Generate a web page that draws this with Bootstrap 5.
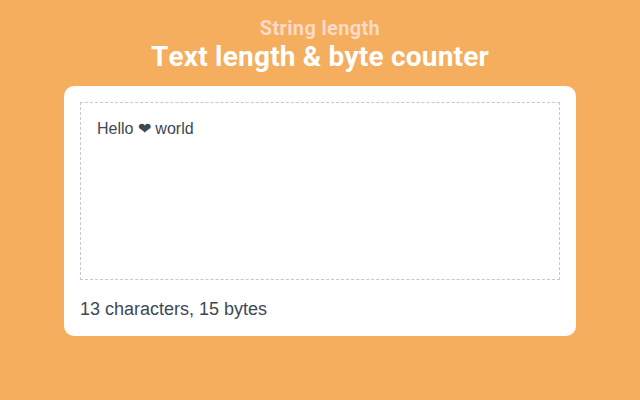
<!DOCTYPE html>
<html lang="en">
<head>
<meta charset="utf-8">
<meta name="viewport" content="width=device-width, initial-scale=1">
<title>String length</title>
<link href="https://cdn.jsdelivr.net/npm/bootstrap@5.3.0/dist/css/bootstrap.min.css" rel="stylesheet">
<style>
body { background: #f5ad5e; color: #3d4852; font-family: "Liberation Sans", Arial, sans-serif; }
.page { width: 512px; }
.heading { font-family: Roboto, sans-serif; font-weight: 700; color: #fff; font-kerning: none; }
.heading-sub { font-size: 20px; line-height: 24px; letter-spacing: .33px; color: #fbdac6; }
.heading-main { font-size: 28px; line-height: 34px; letter-spacing: .2px; }
.panel { border-radius: 10px; height: 250px; margin-top: 12px; }
.editor { display: block; height: 178px; border: 1px dashed #bccad9; resize: none; outline: 0; color: inherit; font-size: 16px; line-height: 20px; }
.result { font-size: 18px; line-height: 26px; }
</style>
</head>
<body>
<main class="page mx-auto pt-3">
  <header class="text-center">
    <h2 class="heading heading-sub mb-0">String length</h2>
    <h1 class="heading heading-main mb-0">Text length &amp; byte counter</h1>
  </header>
  <section class="panel bg-white p-3">
    <textarea class="editor w-100 p-3" spellcheck="false" aria-label="Text">Hello ❤ world</textarea>
    <p class="result mt-3 mb-0">13 characters, 15 bytes</p>
  </section>
</main>
<script src="https://cdn.jsdelivr.net/npm/bootstrap@5.3.0/dist/js/bootstrap.bundle.min.js"></script>
</body>
</html>
